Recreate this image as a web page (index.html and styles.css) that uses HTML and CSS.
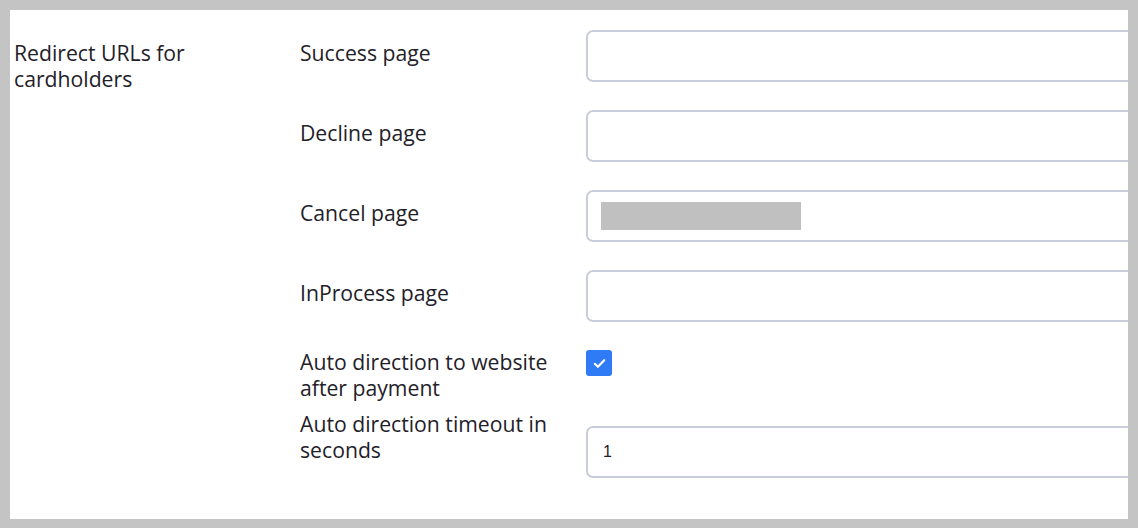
FILE: index.html
```html
<!DOCTYPE html>
<html>
<head>
<meta charset="utf-8">
<link rel="stylesheet" href="styles.css">
</head>
<body>
<div class="card">
  <div class="section">
    <div class="section-title">Redirect URLs for cardholders</div>
    <div class="fields">
      <div class="row row-input">
        <div class="label">Success page</div>
        <div class="input"></div>
      </div>
      <div class="row row-input">
        <div class="label">Decline page</div>
        <div class="input"></div>
      </div>
      <div class="row row-input">
        <div class="label">Cancel page</div>
        <div class="input"><span class="redacted"></span></div>
      </div>
      <div class="row row-input">
        <div class="label">InProcess page</div>
        <div class="input"></div>
      </div>
      <div class="row row-check">
        <div class="label">Auto direction to website after payment</div>
        <div class="checkbox">
          <svg width="13" height="11" viewBox="0 0 13 11"><path d="M1.8 5.8 L4.9 8.8 L11.2 2.2" fill="none" stroke="#fff" stroke-width="2.2" stroke-linecap="round" stroke-linejoin="round"/></svg>
        </div>
      </div>
      <div class="row row-timeout">
        <div class="label">Auto direction timeout in seconds</div>
        <div class="input"><span class="value">1</span></div>
      </div>
    </div>
  </div>
</div>
</body>
</html>
```

FILE: styles.css
```css
html, body {
  margin: 0;
  padding: 0;
}
body {
  background: #c4c4c4;
  width: 1138px;
  height: 528px;
  padding: 10px 10px 9px 10px;
  box-sizing: border-box;
  font-family: "Open Sans", "Noto Sans", sans-serif;
  color: #1f2129;
}
.card {
  background: #fff;
  height: 100%;
  overflow: hidden;
}
.section {
  display: flex;
  padding: 20px 0 0 4px;
}
.section-title {
  width: 286px;
  flex: none;
  font-size: 21.2px;
  line-height: 26px;
  padding-top: 10px;
  padding-right: 40px;
  box-sizing: border-box;
}
.fields {
  flex: none;
  display: flex;
  flex-direction: column;
}
.row {
  display: flex;
  align-items: flex-start;
}
.label {
  width: 286px;
  flex: none;
  font-size: 21.2px;
  line-height: 26px;
  padding-right: 20px;
  box-sizing: border-box;
}
.input {
  width: 700px;
  height: 52px;
  box-sizing: border-box;
  border: 2px solid #c9ccda;
  border-radius: 7px;
  display: flex;
  align-items: center;
  padding-left: 13px;
  flex: none;
}
.row-input {
  margin-bottom: 28px;
}
.row-input .label {
  padding-top: 10px;
}
.redacted {
  display: block;
  width: 200px;
  height: 28px;
  background: #c0c0c0;
}
.row-check {
  margin-top: -1px;
  height: 52px;
}
.row-check .label {
  padding-top: 0;
}
.checkbox {
  width: 26px;
  height: 26px;
  margin-top: 1px;
  background: #2f7bf6;
  border-radius: 3px;
  display: flex;
  align-items: center;
  justify-content: center;
}
.row-timeout {
  margin-top: 10px;
}
.row-timeout .input {
  margin-top: 15px;
  padding-left: 15px;
}
.value {
  font-size: 16px;
  color: #1f2129;
  font-family: "Liberation Sans", Arial, sans-serif;
}
```
